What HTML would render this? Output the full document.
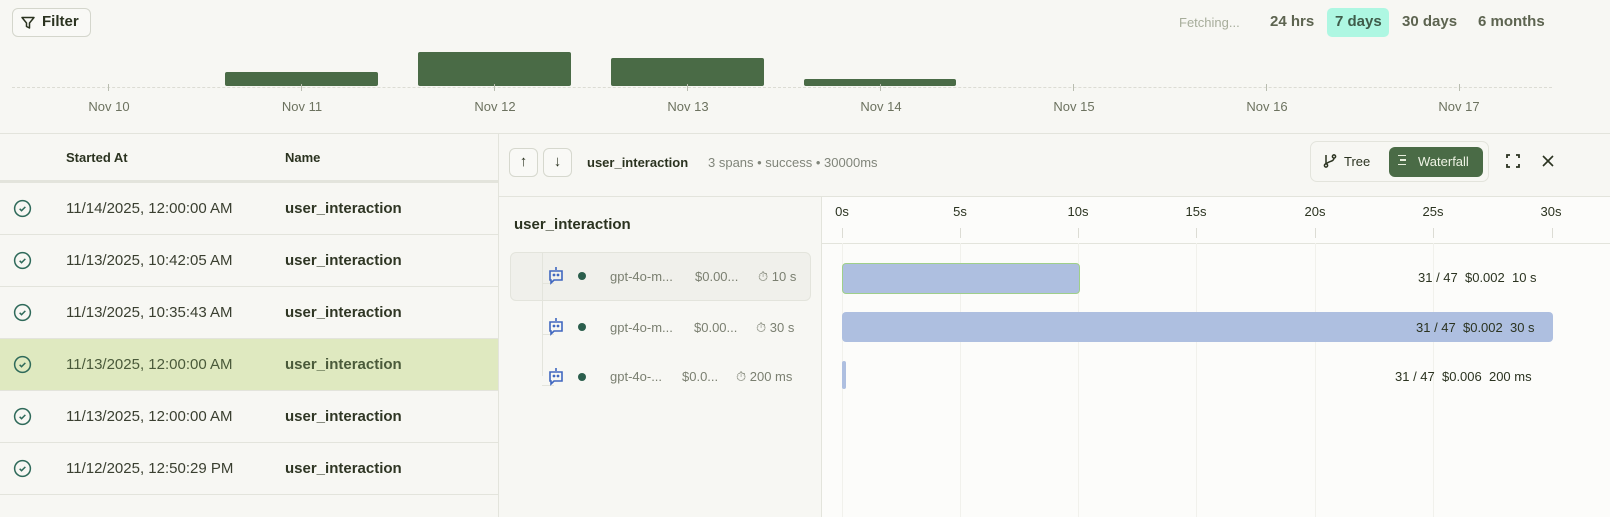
<!DOCTYPE html>
<html><head><meta charset="utf-8"><style>
*{box-sizing:border-box;margin:0;padding:0}
body{width:1610px;height:517px;overflow:hidden;background:#f7f7f3;font-family:"Liberation Sans",sans-serif;color:#2b3320;position:relative}
.a{position:absolute}
.bar{position:absolute;background:#4a6b46;border-radius:2px}
.lbl{position:absolute;top:99px;font-size:13px;color:#6c725f;transform:translateX(-50%)}
.tk{position:absolute;top:84px;width:1px;height:7px;background:#b9bdb0}
.row{position:absolute;left:0;width:498px;height:52px;border-bottom:1px solid #e3e4dc}
.row .d{position:absolute;left:66px;top:17px;font-size:15px;color:#3a3f30}
.row .n{position:absolute;left:285px;top:17px;font-size:15px;font-weight:bold;color:#2f3624}
.row svg{position:absolute;left:13px;top:16px}
.tl{position:absolute;top:204px;font-size:13px;color:#2b3320;transform:translateX(-50%)}
.vl{position:absolute;top:228px;width:1px;height:10px;background:#dcdcd4}
.gl{position:absolute;top:243px;bottom:0;width:1px;background:#f1f1ec}
.sp{position:absolute;left:610px;font-size:13px;color:#7a7f70}
.bt{position:absolute;width:29px;height:29px;border:1px solid #d6d8ce;border-radius:6px;background:#f9f9f6;text-align:center;line-height:26px;font-size:15px}
</style></head><body>
<div class="a" style="left:12px;top:8px;width:79px;height:29px;border:1px solid #d4d6cc;border-radius:6px;background:#f9f9f6"></div>
<svg class="a" style="left:20px;top:15px" width="16" height="16" viewBox="0 0 16 16"><path d="M2 2.5h12l-4.5 5.5v5l-3-1.5v-3.5z" fill="none" stroke="#2b3320" stroke-width="1.5" stroke-linejoin="round"/></svg>
<div class="a" style="left:42px;top:13px;font-size:15px;font-weight:bold">Filter</div>
<div class="a" style="left:1179px;top:15px;font-size:13px;color:#a7ad9b">Fetching...</div>
<div class="a" style="left:1270px;top:13px;font-size:15px;font-weight:bold;color:#5d6450">24 hrs</div>
<div class="a" style="left:1327px;top:8px;width:62px;height:29px;background:#aef7e2;border-radius:5px"></div>
<div class="a" style="left:1335px;top:13px;font-size:15px;font-weight:bold;color:#3f5c4a">7 days</div>
<div class="a" style="left:1402px;top:13px;font-size:15px;font-weight:bold;color:#5d6450">30 days</div>
<div class="a" style="left:1478px;top:13px;font-size:15px;font-weight:bold;color:#5d6450">6 months</div>
<div class="a" style="left:12px;top:87px;width:1540px;border-top:1px dashed #dcdcd4"></div>
<div class="bar" style="left:225px;top:72px;width:153px;height:14px"></div>
<div class="bar" style="left:418px;top:52px;width:153px;height:34px"></div>
<div class="bar" style="left:611px;top:58px;width:153px;height:28px"></div>
<div class="bar" style="left:804px;top:79px;width:152px;height:7px"></div>
<div class="tk" style="left:108px"></div><div class="tk" style="left:301px"></div><div class="tk" style="left:494px"></div><div class="tk" style="left:687px"></div><div class="tk" style="left:880px"></div><div class="tk" style="left:1073px"></div><div class="tk" style="left:1266px"></div><div class="tk" style="left:1459px"></div>
<div class="lbl" style="left:109px">Nov 10</div><div class="lbl" style="left:302px">Nov 11</div><div class="lbl" style="left:495px">Nov 12</div><div class="lbl" style="left:688px">Nov 13</div><div class="lbl" style="left:881px">Nov 14</div><div class="lbl" style="left:1074px">Nov 15</div><div class="lbl" style="left:1267px">Nov 16</div><div class="lbl" style="left:1459px">Nov 17</div>
<div class="a" style="left:0;top:133px;width:1610px;border-top:1px solid #e3e4dc"></div>
<!-- table -->
<div class="a" style="left:0;top:180px;width:498px;height:3px;background:#e3e4dc"></div>
<div class="a" style="left:66px;top:150px;font-size:13px;font-weight:bold">Started At</div>
<div class="a" style="left:285px;top:150px;font-size:13px;font-weight:bold">Name</div>
<div class="a" style="left:498px;top:133px;width:1px;height:384px;background:#e3e4dc"></div>
<div class="row" style="top:183px"><svg width="19" height="19" viewBox="0 0 20 20"><circle cx="10" cy="10" r="8.3" fill="none" stroke="#2f6a5a" stroke-width="1.6"/><path d="M7 10.3l2 2 4-4" fill="none" stroke="#2f6a5a" stroke-width="1.6"/></svg><div class="d">11/14/2025, 12:00:00 AM</div><div class="n">user_interaction</div></div>
<div class="row" style="top:235px"><svg width="19" height="19" viewBox="0 0 20 20"><circle cx="10" cy="10" r="8.3" fill="none" stroke="#2f6a5a" stroke-width="1.6"/><path d="M7 10.3l2 2 4-4" fill="none" stroke="#2f6a5a" stroke-width="1.6"/></svg><div class="d">11/13/2025, 10:42:05 AM</div><div class="n">user_interaction</div></div>
<div class="row" style="top:287px"><svg width="19" height="19" viewBox="0 0 20 20"><circle cx="10" cy="10" r="8.3" fill="none" stroke="#2f6a5a" stroke-width="1.6"/><path d="M7 10.3l2 2 4-4" fill="none" stroke="#2f6a5a" stroke-width="1.6"/></svg><div class="d">11/13/2025, 10:35:43 AM</div><div class="n">user_interaction</div></div>
<div class="row" style="top:339px;background:#dfe9c0"><svg width="19" height="19" viewBox="0 0 20 20"><circle cx="10" cy="10" r="8.3" fill="none" stroke="#2f6a5a" stroke-width="1.6"/><path d="M7 10.3l2 2 4-4" fill="none" stroke="#2f6a5a" stroke-width="1.6"/></svg><div class="d" style="color:#4a5a3a">11/13/2025, 12:00:00 AM</div><div class="n" style="color:#4a5a3a">user_interaction</div></div>
<div class="row" style="top:391px"><svg width="19" height="19" viewBox="0 0 20 20"><circle cx="10" cy="10" r="8.3" fill="none" stroke="#2f6a5a" stroke-width="1.6"/><path d="M7 10.3l2 2 4-4" fill="none" stroke="#2f6a5a" stroke-width="1.6"/></svg><div class="d">11/13/2025, 12:00:00 AM</div><div class="n">user_interaction</div></div>
<div class="row" style="top:443px"><svg width="19" height="19" viewBox="0 0 20 20"><circle cx="10" cy="10" r="8.3" fill="none" stroke="#2f6a5a" stroke-width="1.6"/><path d="M7 10.3l2 2 4-4" fill="none" stroke="#2f6a5a" stroke-width="1.6"/></svg><div class="d">11/12/2025, 12:50:29 PM</div><div class="n">user_interaction</div></div>
<!-- right panel header -->
<div class="bt" style="left:509px;top:148px">↑</div>
<div class="bt" style="left:543px;top:148px">↓</div>
<div class="a" style="left:587px;top:155px;font-size:13px;font-weight:bold">user_interaction</div>
<div class="a" style="left:708px;top:155px;font-size:13px;color:#80857a">3 spans • success • 30000ms</div>
<div class="a" style="left:1310px;top:141px;width:179px;height:41px;border:1px solid #e3e4dc;border-radius:7px"></div>
<svg class="a" style="left:1322px;top:153px" width="16" height="16" viewBox="0 0 16 16" fill="none" stroke="#2b3320" stroke-width="1.5"><circle cx="4" cy="12.5" r="1.6"/><circle cx="12" cy="3.5" r="1.6"/><path d="M4 2v9M12 5c0 4-6 3-7.5 6"/></svg>
<div class="a" style="left:1344px;top:154px;font-size:13px">Tree</div>
<div class="a" style="left:1389px;top:147px;width:94px;height:30px;background:#4a6b46;border-radius:6px"></div>
<div class="a" style="left:1398px;top:155px;width:8px;height:10px;border-top:1.5px solid #e8eedd;border-bottom:1.5px solid #e8eedd"></div><div class="a" style="left:1400px;top:159px;width:6px;height:1.5px;background:#e8eedd"></div>
<div class="a" style="left:1418px;top:154px;font-size:13px;color:#eef3e4">Waterfall</div>
<svg class="a" style="left:1506px;top:154px" width="14" height="14" viewBox="0 0 14 14" fill="none" stroke="#2b3320" stroke-width="1.8"><path d="M1 4V1h3M10 1h3v3M13 10v3h-3M4 13H1v-3"/></svg>
<svg class="a" style="left:1542px;top:155px" width="12" height="12" viewBox="0 0 12 12" stroke="#2b3320" stroke-width="1.6"><path d="M1 1l10 10M11 1L1 11"/></svg>
<div class="a" style="left:499px;top:196px;width:1111px;border-top:1px solid #e3e4dc"></div>
<!-- tree -->
<div class="a" style="left:514px;top:216px;font-size:15px;font-weight:bold">user_interaction</div>
<div class="a" style="left:510px;top:252px;width:301px;height:49px;background:#f0f0eb;border:1px solid #e3e4dc;border-radius:6px"></div>
<div class="a" style="left:542px;top:253px;width:1px;height:123px;background:#e3e4dc"></div>
<div class="a" style="left:542px;top:283px;width:12px;height:1px;background:#e3e4dc"></div>
<div class="a" style="left:542px;top:334px;width:12px;height:1px;background:#e3e4dc"></div>
<div class="a" style="left:542px;top:385px;width:12px;height:1px;background:#e3e4dc"></div>
<svg class="a" style="left:546px;top:265px" width="20" height="20" viewBox="0 0 20 20" fill="none" stroke="#4067c0" stroke-width="1.6"><path d="M10 2v3M4 6h12v9H8l-3 3v-3H4z"/><circle cx="8" cy="10" r=".6" fill="#4067c0"/><circle cx="12" cy="10" r=".6" fill="#4067c0"/></svg>
<svg class="a" style="left:546px;top:316px" width="20" height="20" viewBox="0 0 20 20" fill="none" stroke="#4067c0" stroke-width="1.6"><path d="M10 2v3M4 6h12v9H8l-3 3v-3H4z"/><circle cx="8" cy="10" r=".6" fill="#4067c0"/><circle cx="12" cy="10" r=".6" fill="#4067c0"/></svg>
<svg class="a" style="left:546px;top:366px" width="20" height="20" viewBox="0 0 20 20" fill="none" stroke="#4067c0" stroke-width="1.6"><path d="M10 2v3M4 6h12v9H8l-3 3v-3H4z"/><circle cx="8" cy="10" r=".6" fill="#4067c0"/><circle cx="12" cy="10" r=".6" fill="#4067c0"/></svg>
<div class="a" style="left:578px;top:272px;width:8px;height:8px;border-radius:50%;background:#2b5e4c"></div>
<div class="a" style="left:578px;top:323px;width:8px;height:8px;border-radius:50%;background:#2b5e4c"></div>
<div class="a" style="left:578px;top:373px;width:8px;height:8px;border-radius:50%;background:#2b5e4c"></div>
<div class="sp" style="top:269px">gpt-4o-m...</div><div class="sp" style="left:695px;top:269px">$0.00...</div><div class="sp" style="left:758px;top:269px">⏱ 10 s</div>
<div class="sp" style="top:320px">gpt-4o-m...</div><div class="sp" style="left:694px;top:320px">$0.00...</div><div class="sp" style="left:756px;top:320px">⏱ 30 s</div>
<div class="sp" style="top:369px">gpt-4o-...</div><div class="sp" style="left:682px;top:369px">$0.0...</div><div class="sp" style="left:736px;top:369px">⏱ 200 ms</div>
<!-- waterfall -->
<div class="a" style="left:821px;top:197px;width:1px;height:320px;background:#e3e4dc"></div>
<div class="a" style="left:822px;top:197px;width:788px;height:320px;background:#fcfcfa"></div>
<div class="a" style="left:822px;top:243px;width:788px;border-top:1px solid #e3e4dc"></div>
<div class="tl" style="left:842px">0s</div><div class="tl" style="left:960px">5s</div><div class="tl" style="left:1078px">10s</div><div class="tl" style="left:1196px">15s</div><div class="tl" style="left:1315px">20s</div><div class="tl" style="left:1433px">25s</div><div class="tl" style="left:1551px">30s</div>
<div class="vl" style="left:842px"></div><div class="vl" style="left:960px"></div><div class="vl" style="left:1078px"></div><div class="vl" style="left:1196px"></div><div class="vl" style="left:1315px"></div><div class="vl" style="left:1433px"></div><div class="vl" style="left:1552px"></div>
<div class="gl" style="left:842px"></div><div class="gl" style="left:960px"></div><div class="gl" style="left:1078px"></div><div class="gl" style="left:1196px"></div><div class="gl" style="left:1315px"></div><div class="gl" style="left:1433px"></div>
<div class="a" style="left:842px;top:263px;width:238px;height:31px;background:#aebfe0;border:1px solid #9fcf8a;border-radius:4px"></div>
<div class="a" style="left:842px;top:312px;width:711px;height:30px;background:#aebfe0;border-radius:4px"></div>
<div class="a" style="left:842px;top:361px;width:4px;height:28px;background:#aebfe0;border-radius:2px"></div>
<div class="a" style="left:1418px;top:270px;font-size:13px">31 / 47 &nbsp;$0.002 &nbsp;10 s</div>
<div class="a" style="left:1416px;top:320px;font-size:13px">31 / 47 &nbsp;$0.002 &nbsp;30 s</div>
<div class="a" style="left:1395px;top:369px;font-size:13px">31 / 47 &nbsp;$0.006 &nbsp;200 ms</div>
</body></html>
